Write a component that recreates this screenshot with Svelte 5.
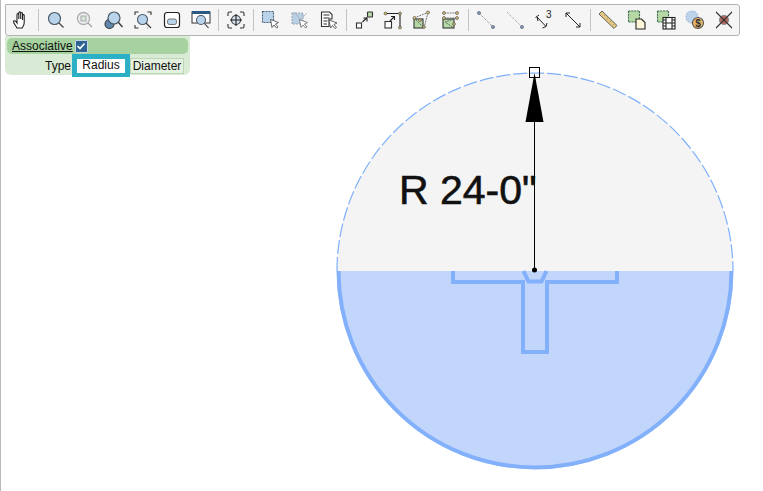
<script lang="ts">
	const groups = [
		['hand'],
		['zoom', 'zoomfit', 'zoomarea', 'zoomext', 'zoomsheet', 'zoomview'],
		['center'],
		['select', 'deselect', 'list'],
		['p2', 'p3', 'tri', 'poly'],
		['line', 'lineb', 'dim3', 'dim'],
		['ruler', 'copy', 'film', 'cost', 'cross']
	];
</script>

{#snippet icon(name: string)}
	<svg class="icon" viewBox="0 0 20 20" fill="none" stroke="#333" stroke-width="1.1">
		{#if name === 'hand'}
			<path d="M6 18c-1-2-3.500-4.500-3.500-6.500 0-1 1.500-1 2.500 0l1 1.500V4.500c0-1.300 1.800-1.300 1.800 0V9V2.800c0-1.300 1.900-1.300 1.900 0V9V3.500c0-1.300 1.800-1.300 1.800 0V10V5.500c0-1.200 1.700-1.200 1.700 0V13c0 2-1 3.500-2 5z" fill="#fff" stroke="#222" />
		{:else if name === 'zoom'}
			<circle cx="8.500" cy="8.500" r="6" fill="#b9d4ea" stroke="#4a5a68" stroke-width="1.200" />
			<path d="M13 13l4.500 4.500" stroke="#444" stroke-width="1.300" />
		{:else if name === 'zoomfit'}
			<g opacity="0.45">
				<circle cx="8.500" cy="8.500" r="6" fill="#e8f0e8" stroke="#556" stroke-width="1.300" />
				<rect x="6" y="6" width="5" height="5" fill="#b5d8b0" stroke="#556" />
				<path d="M13 13l4 4" />
			</g>
		{:else if name === 'zoomarea'}
			<circle cx="5.500" cy="14" r="4.500" fill="#5f87ad" />
			<circle cx="10" cy="8" r="6" fill="#b9d4ea" stroke="#4a5a68" stroke-width="1.200" />
			<path d="M14.500 12.500l4 4.500" stroke-width="1.300" />
		{:else if name === 'zoomext'}
			<path d="M2 5V2h3.500M14.500 2H18v3M2 15v3h3.500M14.500 18H15" />
			<circle cx="9.500" cy="9.500" r="5" fill="#b9d4ea" stroke="#4a5a68" stroke-width="1.100" />
			<path d="M13 13l5 5" />
		{:else if name === 'zoomsheet'}
			<rect x="2.500" y="2.500" width="15" height="15" rx="2.500" fill="#fff" stroke="#222" stroke-width="1.200" />
			<rect x="5.500" y="9" width="9" height="5.500" rx="2" fill="#b9d4ea" stroke="#555" stroke-width="0.800" />
		{:else if name === 'zoomview'}
			<rect x="1" y="2" width="18" height="11" fill="#fff" stroke="#444" />
			<rect x="1" y="1" width="18" height="3" fill="#2b5a85" stroke="none" />
			<circle cx="10" cy="10" r="4.500" fill="#b9d4ea" stroke="#4a5a68" stroke-width="1.100" />
			<path d="M13.500 13.500l4 4.500" />
		{:else if name === 'center'}
			<path d="M2 6V3.500Q2 2 3.500 2H6M14 2h2.500Q18 2 18 3.500V6M2 14v2.500Q2 18 3.500 18H6M14 18h2.500Q18 18 18 16.500V14" />
			<circle cx="10" cy="10" r="4.500" fill="#d7e4ef" stroke="#333" />
			<path d="M10 4v12M4 10h12" stroke="#222" />
		{:else if name === 'select'}
			<rect x="1.500" y="1.500" width="11" height="11" fill="#b9d4ea" stroke="#4a5f78" stroke-dasharray="2 1" />
			<path d="M9.500 9.500l8 3-3 1.500 2.500 3-1.500 1-2.500-3-2 2.500z" fill="#fff" stroke="#444" stroke-width="0.800" />
		{:else if name === 'deselect'}
			<rect x="2" y="3" width="11" height="11" fill="#b9cfe2" stroke="#9ab" stroke-dasharray="2 1" />
			<path d="M4 2l13 15M17 3l-5 5" stroke="#aab" stroke-width="0.800" />
			<path d="M9.500 9.500l8 3-3 1.500 2.500 3-1.500 1-2.500-3-2 2.500z" fill="#fff" stroke="#666" stroke-width="0.800" />
		{:else if name === 'list'}
			<path d="M2.500 2h8l2.500 2.500V9H10v7.500H2.500z" fill="#fff" stroke="#333" />
			<path d="M4.500 5h6M4.500 8h6M4.500 11h4M4.500 14h3.500" stroke="#333" />
			<path d="M10 10l8 3-3 1.500 2.500 3-1.500 1-2.500-3-2 2.500z" fill="#fff" stroke="#444" stroke-width="0.800" />
		{:else if name === 'p2'}
			<rect x="2.500" y="13" width="5" height="5" fill="#fff" stroke="#333" />
			<rect x="13.500" y="2" width="5" height="5" rx="0.500" fill="#b5d8a5" stroke="#333" />
			<path d="M8.500 12L13 7.500M9.500 8h3.500v3.500" stroke="#222" />
		{:else if name === 'p3'}
			<rect x="2" y="11.500" width="6.500" height="6.500" fill="#fff" stroke="#333" />
			<path d="M2.500 3.500h14.500V17.500" stroke="#222" />
			<circle cx="2.500" cy="3.500" r="1.400" fill="#d8c070" stroke="#444" stroke-width="0.700" />
			<circle cx="17" cy="3.500" r="1.400" fill="#d8c070" stroke="#444" stroke-width="0.700" />
			<circle cx="17" cy="17.500" r="1.400" fill="#d8c070" stroke="#444" stroke-width="0.700" />
			<path d="M7 11l4.500-4.500M8 6.500h3.500V10" stroke="#222" />
		{:else if name === 'tri'}
			<rect x="2" y="9" width="9" height="9" fill="#b5d8a5" stroke="#333" />
			<path d="M2 8L16 2.500M2 8l10 10M12 18L16 2.500" stroke="#555" stroke-dasharray="2 0.800" stroke-width="0.800" />
			<circle cx="2.500" cy="8" r="1.500" fill="#d8c070" stroke="#555" stroke-width="0.700" />
			<circle cx="16" cy="2.500" r="1.500" fill="#d8c070" stroke="#555" stroke-width="0.700" />
			<circle cx="8" cy="10" r="1.400" fill="#d8c070" stroke="#555" stroke-width="0.700" />
			<circle cx="12" cy="17" r="1.400" fill="#d8c070" stroke="#555" stroke-width="0.700" />
		{:else if name === 'poly'}
			<rect x="2" y="9" width="11" height="9" fill="#b5d8a5" stroke="#333" />
			<path d="M3 3h13M3 8h13M16 8L4 12l9 6" stroke="#555" stroke-dasharray="2 0.800" stroke-width="0.800" />
			<circle cx="3" cy="3" r="1.500" fill="#d8c070" stroke="#555" stroke-width="0.700" />
			<circle cx="16" cy="3" r="1.500" fill="#d8c070" stroke="#555" stroke-width="0.700" />
			<circle cx="16" cy="8" r="1.500" fill="#d8c070" stroke="#555" stroke-width="0.700" />
			<circle cx="3" cy="8" r="1.500" fill="#d8c070" stroke="#555" stroke-width="0.700" />
			<circle cx="13" cy="14" r="1.400" fill="#d8c070" stroke="#555" stroke-width="0.700" />
		{:else if name === 'line'}
			<path d="M3 3L17 17" stroke="#666" stroke-dasharray="1.200 1" stroke-width="0.800" />
			<circle cx="3" cy="3" r="1.600" fill="#7c9ab8" stroke="#556" stroke-width="0.600" />
			<circle cx="17" cy="17" r="1.600" fill="#7c9ab8" stroke="#556" stroke-width="0.600" />
		{:else if name === 'lineb'}
			<path d="M2 2L17 17" stroke="#888" stroke-dasharray="1.200 1" stroke-width="0.800" />
			<circle cx="17" cy="17" r="1.600" fill="#7c9ab8" stroke="#556" stroke-width="0.600" />
		{:else if name === 'dim3'}
			<path d="M3 7l9 9.500M1.500 7.500L5 5M3 7l1 4M12 16.500l-3.500 1.500M12 16.500l1-3.500" stroke="#222" stroke-width="1" />
			<text class="sup" x="12" y="8">3</text>
		{:else if name === 'dim'}
			<path d="M3 3l14 14M3 3h4M3 3v4M17 17h-4M17 17v-4" stroke="#222" stroke-width="1" />
		{:else if name === 'ruler'}
			<path d="M4 1L19 15.500 16 18.500 1 4z" fill="#e4c87e" stroke="#555" stroke-width="0.900" />
			<path d="M6 6l1.500-1.500M9 9l1.500-1.500M12 12l1.500-1.500M15 15l1.500-1.500" stroke="#887" stroke-width="0.800" />
		{:else if name === 'copy'}
			<rect x="1.500" y="1" width="11" height="11" fill="#b5d8a5" stroke="#3d6a4a" stroke-dasharray="2 0.800" />
			<path d="M9 9h5.500l3.500 3.500V19H9z" fill="#fff6d8" stroke="#222" />
		{:else if name === 'film'}
			<rect x="1.500" y="1" width="11" height="11" fill="#b5d8a5" stroke="#3d6a4a" stroke-dasharray="2 0.800" />
			<rect x="7" y="7.500" width="12" height="11.500" fill="#fff" stroke="#222" />
			<path d="M10 7.500V19M16 7.500V19M10 13h6M7 10h3M7 13h3M7 16h3M16 10h3M16 13h3M16 16h3" stroke="#222" />
		{:else if name === 'cost'}
			<circle cx="7" cy="7" r="6" fill="#bcd3ea" stroke="#9db8d8" stroke-dasharray="2 1" />
			<circle cx="13" cy="13" r="5.500" fill="#e8b468" stroke="#555" />
			<text class="dollar" x="13" y="16.500">$</text>
		{:else}
			<circle cx="10" cy="10" r="4.500" fill="#b86a62" stroke="#8a8a8a" />
			<path d="M2 2l16 16M18 2L2 18" stroke="#333" />
		{/if}
	</svg>
{/snippet}

<div class="page">
	<svg class="drawing" width="763" height="491" viewBox="0 0 763 491">
		<path d="M337 271a198 198 0 0 1 396 0z" fill="#f4f4f4" />
		<path d="M337 271a198 198 0 0 1 396 0" fill="none" stroke="#7fb0fb" stroke-width="1.200" stroke-dasharray="14 3" />
		<path d="M337 271a198 198 0 0 0 396 0z" fill="#c2d6fb" />
		<path d="M338.500 271a196.500 196.500 0 0 0 393 0" fill="none" stroke="#82b0fb" stroke-width="4" />
		<path d="M453 271v11h70v70h24V282h70v-11M523.500 271l5 10.500h13l5-10.500" fill="none" stroke="#82b0fb" stroke-width="4" />

		<line x1="534.500" y1="76" x2="534.500" y2="270" stroke="#000" />
		<path d="M534.500 73l9 49h-18z" fill="#000" />
		<circle cx="534.500" cy="270" r="2.500" fill="#000" />
		<rect x="529.500" y="67.500" width="10" height="10" fill="none" stroke="#000" />
		<text class="dim-label" x="399" y="204">R 24-0"</text>
	</svg>

	<div class="toolbar">
		{#each groups as group, i}
			{#if i > 0}<span class="sep"></span>{/if}
			{#each group as name}
				<span class="tool">{@render icon(name)}</span>
			{/each}
		{/each}
	</div>

	<div class="panel">
		<div class="panel-head">
			<span class="assoc">Associative</span>
			<span class="check">
				<svg width="10" height="10" viewBox="0 0 10 10" fill="none" stroke="#fff" stroke-width="1.600"><path d="M1.500 5l2.500 2.500 4.500-5" /></svg>
			</span>
		</div>
		<div class="panel-row">
			<span class="type">Type</span>
			<span class="radius">Radius</span>
			<span class="diameter">Diameter</span>
		</div>
	</div>
</div>

<style>
	:global(body) {
		background: #fff;
	}

	.page {
		position: relative;
		width: 763px;
		height: 491px;
		overflow: hidden;
		box-sizing: border-box;
		padding: 4px 0 0 5px;
		border-left: 1px solid #b8b8b8;
		font-family: 'Liberation Sans', Arial, sans-serif;
		font-size: 12px;
		color: #111;
	}

	.drawing {
		position: absolute;
		left: -1px;
		top: 0;
	}

	.dim-label {
		font-family: 'Liberation Sans', Arial, sans-serif;
		font-size: 41px;
		fill: #111;
		stroke: #111;
		stroke-width: 0.600px;
	}

	.toolbar {
		position: relative;
		box-sizing: border-box;
		display: flex;
		align-items: center;
		width: 735px;
		height: 32px;
		margin-left: -1px;
		padding-left: 0.500px;
		background: #f5f5f5;
		border: 1px solid #b4b4b4;
		border-radius: 0 3px 3px 3px;
	}

	.tool {
		display: flex;
		justify-content: center;
		width: 29px;
		flex: none;
	}

	.icon {
		width: 20px;
		height: 20px;
		display: block;
	}

	.sup {
		font-family: 'Liberation Sans', Arial, sans-serif;
		font-size: 10px;
		fill: #222;
		stroke: none;
	}

	.dollar {
		font-family: 'Liberation Sans', Arial, sans-serif;
		font-size: 10px;
		font-weight: 700;
		fill: #333;
		stroke: none;
		text-anchor: middle;
	}

	.sep {
		flex: none;
		width: 1px;
		height: 22px;
		margin: 0 2.500px;
		background: #c4c4c4;
	}

	.panel {
		position: relative;
		box-sizing: border-box;
		width: 185px;
		height: 39px;
		margin-left: -1px;
		padding: 2px;
		background: #d9ebd4;
		border-radius: 0 0 6px 6px;
	}

	.panel-head {
		display: flex;
		align-items: center;
		gap: 2px;
		height: 16px;
		padding-left: 5px;
		background: #a6d2a0;
		border-radius: 5px;
	}

	.assoc {
		text-decoration: underline;
	}

	.check {
		display: flex;
		align-items: center;
		justify-content: center;
		width: 13px;
		height: 13px;
		background: #2f6396;
		border: 1px solid #c4d8e4;
		box-sizing: border-box;
		border-radius: 1px;
	}

	.panel-row {
		display: flex;
		align-items: center;
		height: 23px;
	}

	.type {
		width: 64px;
		margin-right: 1px;
		text-align: right;
		flex: none;
	}

	.radius {
		box-sizing: border-box;
		flex: none;
		width: 58px;
		height: 23px;
		line-height: 13px;
		text-align: center;
		background: #fff;
		border: 5px solid #2bb0c6;
		border-bottom-width: 4px;
	}

	.diameter {
		box-sizing: border-box;
		flex: none;
		width: 54px;
		height: 16px;
		line-height: 14px;
		text-align: center;
		background: #e4f1e0;
		border: 1px solid #bcd6b8;
	}
</style>
